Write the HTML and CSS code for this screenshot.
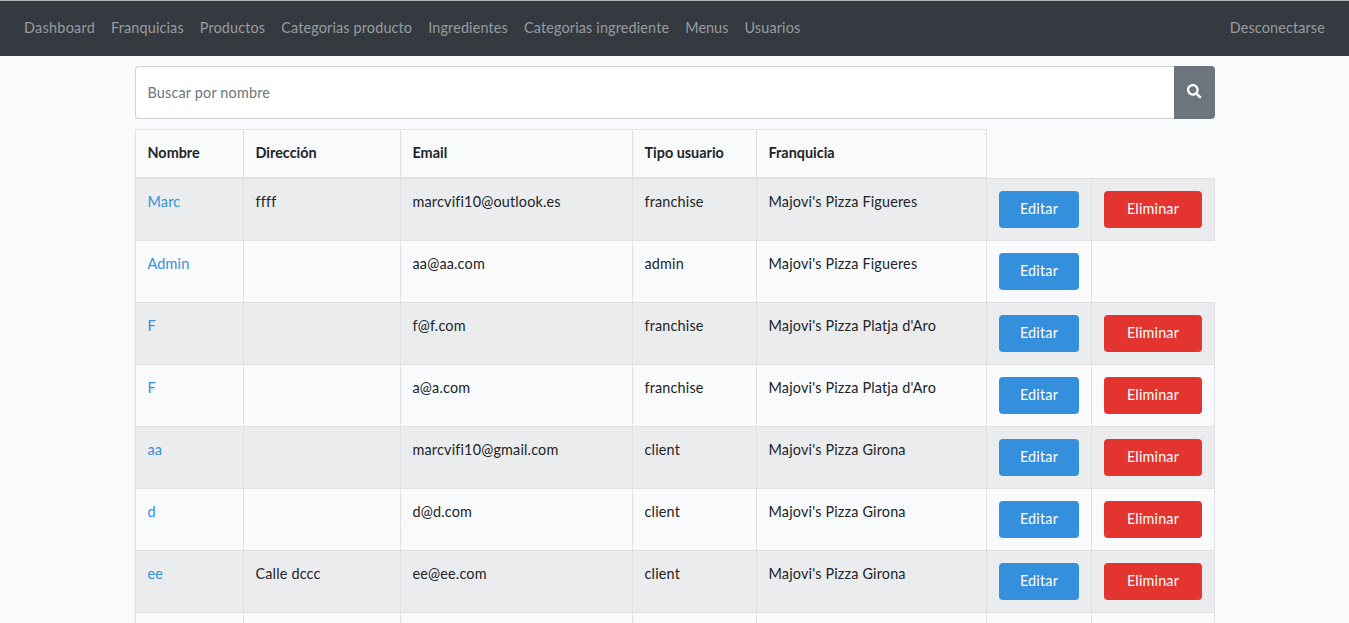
FILE: index.html
```html
<!DOCTYPE html>
<html lang="es">
<head>
<meta charset="utf-8">
<title>Usuarios</title>
<link rel="stylesheet" href="styles.css">
</head>
<body>
<nav class="navbar">
  <a class="nav-link nav-wide" href="#">Dashboard</a>
  <a class="nav-link" href="#">Franquicias</a>
  <a class="nav-link" href="#">Productos</a>
  <a class="nav-link" href="#">Categorias producto</a>
  <a class="nav-link" href="#">Ingredientes</a>
  <a class="nav-link" href="#">Categorias ingrediente</a>
  <a class="nav-link nav-tight" href="#">Menus</a>
  <a class="nav-link" href="#">Usuarios</a>
  <a class="nav-link nav-end" href="#">Desconectarse</a>
</nav>
<main class="container">
  <form class="search">
    <input class="search-input" type="text" placeholder="Buscar por nombre">
    <button class="search-button" type="button" aria-label="Buscar">
      <svg width="14.400" height="14.400" viewBox="0 0 512 512" fill="#fff"><path d="M505 442.700L405.300 343c-4.500-4.500-10.600-7-17-7H372c27.600-35.300 44-79.700 44-128C416 93.100 322.900 0 208 0S0 93.100 0 208s93.100 208 208 208c48.300 0 92.700-16.400 128-44v16.300c0 6.400 2.500 12.500 7 17l99.700 99.700c9.400 9.400 24.600 9.400 33.900 0l28.300-28.300c9.400-9.400 9.400-24.600.1-34zM208 336c-70.700 0-128-57.200-128-128 0-70.700 57.200-128 128-128 70.700 0 128 57.200 128 128 0 70.700-57.200 128-128 128z"/></svg>
    </button>
  </form>
  <table class="table">
    <colgroup><col class="c-name"><col class="c-address"><col class="c-email"><col class="c-type"><col class="c-franchise"><col class="c-edit"><col class="c-delete"></colgroup>
    <thead>
      <tr><th>Nombre</th><th>Dirección</th><th>Email</th><th>Tipo usuario</th><th>Franquicia</th></tr>
    </thead>
    <tbody>
      <tr><td><a href="#">Marc</a></td><td>ffff</td><td>marcvifi10@outlook.es</td><td>franchise</td><td>Majovi's Pizza Figueres</td><td class="action"><button class="btn edit">Editar</button></td><td class="action"><button class="btn delete">Eliminar</button></td></tr>
      <tr><td><a href="#">Admin</a></td><td></td><td>aa@aa.com</td><td>admin</td><td>Majovi's Pizza Figueres</td><td class="action"><button class="btn edit">Editar</button></td></tr>
      <tr><td><a href="#">F</a></td><td></td><td>f@f.com</td><td>franchise</td><td>Majovi's Pizza Platja d'Aro</td><td class="action"><button class="btn edit">Editar</button></td><td class="action"><button class="btn delete">Eliminar</button></td></tr>
      <tr><td><a href="#">F</a></td><td></td><td>a@a.com</td><td>franchise</td><td>Majovi's Pizza Platja d'Aro</td><td class="action"><button class="btn edit">Editar</button></td><td class="action"><button class="btn delete">Eliminar</button></td></tr>
      <tr><td><a href="#">aa</a></td><td></td><td>marcvifi10@gmail.com</td><td>client</td><td>Majovi's Pizza Girona</td><td class="action"><button class="btn edit">Editar</button></td><td class="action"><button class="btn delete">Eliminar</button></td></tr>
      <tr><td><a href="#">d</a></td><td></td><td>d@d.com</td><td>client</td><td>Majovi's Pizza Girona</td><td class="action"><button class="btn edit">Editar</button></td><td class="action"><button class="btn delete">Eliminar</button></td></tr>
      <tr><td><a href="#">ee</a></td><td>Calle dccc</td><td>ee@ee.com</td><td>client</td><td>Majovi's Pizza Girona</td><td class="action"><button class="btn edit">Editar</button></td><td class="action"><button class="btn delete">Eliminar</button></td></tr>
      <tr><td></td><td></td><td></td><td></td><td></td><td></td><td></td></tr>
    </tbody>
  </table>
</main>
</body>
</html>
```
FILE: styles.css
```css
* { box-sizing: border-box; }
html { height: 100%; overflow: hidden; }
body {
  margin: 0;
  height: 100%;
  overflow: hidden;
  background: #f8fafc;
  color: #212529;
  font: 14.4px/23px Lato, "Open Sans", sans-serif;
  letter-spacing: 0.18px;
}
a { color: #3490dc; text-decoration: none; }
.navbar {
  display: flex;
  align-items: center;
  gap: 16px;
  height: 56px;
  padding: 0 24px 2px;
  border-top: 1px solid #b4b6b8;
  background: #343a40;
}
.nav-link { color: #999c9f; white-space: nowrap; letter-spacing: 0.15px; }
.nav-wide { letter-spacing: 0.28px; }
.nav-tight { letter-spacing: 0.05px; }
.nav-end { margin-left: auto; }
.container { width: 1080px; margin-left: 135px; padding-top: 10px; }
.search { display: flex; height: 53px; margin-bottom: 10px; }
.search-input {
  flex: 1;
  min-width: 0;
  padding: 0 11.5px;
  border: 1px solid #ced4da;
  border-right: 0;
  border-radius: 4px 0 0 4px;
  background: #fff;
  font: inherit;
  letter-spacing: inherit;
}
.search-input::placeholder { color: #6c757d; opacity: 1; }
.search-button {
  display: flex;
  align-items: center;
  justify-content: center;
  width: 41px;
  padding: 0 0 2px;
  border: 0;
  border-radius: 0 4px 4px 0;
  background: #6c757d;
}
.table { width: 1080px; table-layout: fixed; border-collapse: collapse; }
.c-name { width: 108px; }
.c-address { width: 157px; }
.c-email { width: 232px; }
.c-type { width: 124px; }
.c-franchise { width: 230px; }
.c-edit { width: 105px; }
.c-delete { width: 123px; }
.table th, .table td {
  padding: 11px 0 0 11.5px;
  border: 1px solid #dee2e6;
  text-align: left;
  vertical-align: top;
  white-space: nowrap;
}
.table th { height: 48.5px; padding-top: 11.4px; border-bottom-width: 2px; font-weight: 700; letter-spacing: 0; }
.table td { height: 62px; }
.table .action { padding-top: 12px; padding-left: 12px; }
.table tbody tr:first-child .action { padding-top: 12px; }
.table tbody tr:nth-child(odd) td { background: #ebecee; }
.btn {
  display: block;
  height: 37px;
  padding: 0 0 2px;
  border: 0;
  border-radius: 4px;
  color: #fff;
  font: inherit;
  letter-spacing: inherit;
}
.edit { width: 80px; background: #3490dc; }
.delete { width: 98px; background: #e3342f; }
```
